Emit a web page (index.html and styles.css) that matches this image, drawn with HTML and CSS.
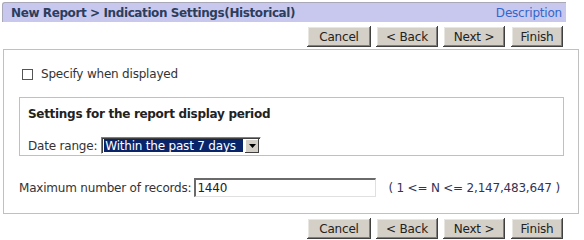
FILE: index.html
```html
<!DOCTYPE html>
<html>
<head>
<meta charset="utf-8">
<link rel="stylesheet" href="styles.css">
</head>
<body>
<div class="page">
  <div class="titlebar">
    <span class="title">New Report &gt; Indication Settings(Historical)</span>
    <a class="desc" href="#">Description</a>
  </div>
  <div class="btnrow">
    <button class="btn b-cancel">Cancel</button>
    <button class="btn b-back">&lt; Back</button>
    <button class="btn b-next">Next &gt;</button>
    <button class="btn b-finish">Finish</button>
  </div>
  <div class="panel">
    <label class="check"><span class="box"></span>Specify when displayed</label>
    <div class="inner">
      <div class="inner-title">Settings for the report display period</div>
      <div class="daterow">
        <span>Date range:</span>
        <span class="select"><span class="sel-val">Within the past 7 days</span><span class="sel-arrow"><svg width="7" height="4" viewBox="0 0 7 4"><path d="M0 0h7L3.5 4z" fill="#000"/></svg></span></span>
      </div>
    </div>
    <div class="maxrow">
      <span>Maximum number of records:</span>
      <span class="input">1440</span>
      <span class="range">( 1 &lt;= N &lt;= 2,147,483,647 )</span>
    </div>
  </div>
  <div class="btnrow bottom">
    <button class="btn b-cancel">Cancel</button>
    <button class="btn b-back">&lt; Back</button>
    <button class="btn b-next">Next &gt;</button>
    <button class="btn b-finish">Finish</button>
  </div>
</div>
</body>
</html>
```
FILE: styles.css
```css
html, body {
  margin: 0;
  padding: 0;
  background: #fff;
}
body {
  font-family: "DejaVu Sans", Verdana, sans-serif;
  font-size: 12px;
  letter-spacing: -0.2px;
  color: #333;
}
.page {
  width: 584px;
  padding-top: 2px;
}
.titlebar {
  margin-left: 2px;
  width: 564px;
  height: 20px;
  box-sizing: border-box;
  background: #c8c8ee;
  border-top: 1px solid #a8a8b8;
  border-left: 1px solid #a8a8b8;
  border-top-left-radius: 3px;
  display: flex;
  align-items: center;
  justify-content: space-between;
  padding: 0 4px 0 8px;
}
.title {
  font-weight: bold;
  color: #2c3e5c;
  letter-spacing: -0.4px;
}
.desc {
  color: #3366cc;
  text-decoration: none;
}
.btnrow {
  display: flex;
  justify-content: flex-end;
  gap: 5px;
  width: 563px;
  margin-top: 4px;
  height: 21px;
}
.btn {
  font-family: "DejaVu Sans", Verdana, sans-serif;
  font-size: 12px;
  letter-spacing: -0.2px;
  color: #222;
  background: #d4d0c8;
  border: none;
  height: 21px;
  padding: 0;
  box-shadow: inset -1px -1px #404040, inset 1px 1px #fff, inset -2px -2px #808080, inset 2px 2px #e8e6e0;
}
.b-cancel { width: 64px; }
.b-back { width: 62px; }
.b-next { width: 62px; }
.b-finish { width: 52px; margin-left: 1px; }
.panel {
  margin-left: 3px;
  margin-top: 2px;
  width: 576px;
  height: 165px;
  box-sizing: border-box;
  border: 1px solid #c0c0c0;
  padding: 17px 14px 0 15px;
}
.check {
  display: flex;
  align-items: center;
  gap: 8px;
  margin-left: 3px;
  height: 14px;
}
.box {
  width: 9px;
  height: 9px;
  border: 1px solid #555;
  background: #fff;
}
.inner {
  margin-top: 16px;
  border: 1px solid #c0c0c0;
  height: 59px;
  box-sizing: border-box;
  padding: 9px 8px 0 8px;
}
.inner-title {
  font-weight: bold;
  color: #222;
  height: 15px;
  letter-spacing: -0.3px;
}
.daterow {
  margin-top: 15px;
  display: flex;
  align-items: center;
  gap: 4px;
}
.select {
  display: flex;
  width: 160px;
  height: 17px;
  box-sizing: border-box;
  border-top: 1px solid #808080;
  border-left: 1px solid #808080;
  border-right: 1px solid #fff;
  border-bottom: 1px solid #fff;
  box-shadow: inset 1px 1px #404040;
  background: #fff;
  padding: 1px 1px 1px 2px;
}
.sel-val {
  flex: 1;
  background: #0a246a;
  color: #fff;
  line-height: 14px;
  padding-left: 1px;
  margin-right: 2px;
}
.sel-arrow {
  width: 14px;
  height: 14px;
  background: #d4d0c8;
  box-shadow: inset -1px -1px #404040, inset 1px 1px #fff;
  display: flex;
  align-items: center;
  justify-content: center;
}
.maxrow {
  margin-top: 22px;
  display: flex;
  align-items: center;
}
.input {
  margin-left: 3px;
  width: 182px;
  height: 19px;
  box-sizing: border-box;
  border-top: 2px solid #6a6a6a;
  border-left: 2px solid #6a6a6a;
  border-right: 1px solid #e0e0e0;
  border-bottom: 1px solid #e0e0e0;
  padding-left: 1px;
  line-height: 16px;
  color: #222;
}
.range {
  margin-left: 12px;
  color: #333355;
}
```
